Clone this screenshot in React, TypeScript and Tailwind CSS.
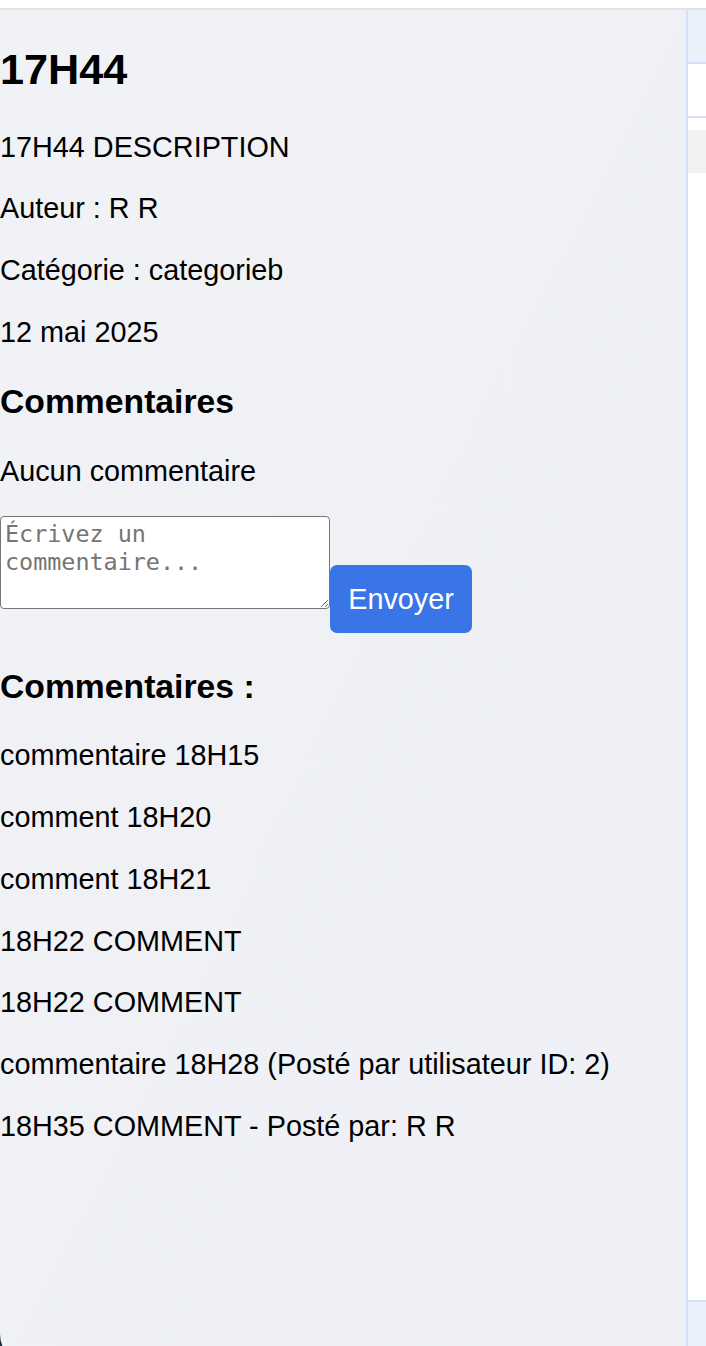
import React from "react";

const comments = [
  "commentaire 18H15",
  "comment 18H20",
  "comment 18H21",
  "18H22 COMMENT",
  "18H22 COMMENT",
  "commentaire 18H28 (Posté par utilisateur ID: 2)",
  "18H35 COMMENT - Posté par: R R",
];

function P({ children }: { children: React.ReactNode }) {
  return <p className="text-[28.8px] leading-[32.9px] my-[28.8px]">{children}</p>;
}

function H3({ children }: { children: React.ReactNode }) {
  return <h3 className="text-[33.7px] leading-[38.7px] font-bold my-[33.7px]">{children}</h3>;
}

function SideStrip() {
  return (
    <div className="w-[18px] self-stretch flex flex-col">
      <div className="h-[54px] shrink-0 bg-[#ebf1fb] border-b-2 border-[#d3e0f7]" />
      <div className="h-[54px] shrink-0 bg-white border-b-2 border-[#d3e0f7]" />
      <div className="h-[12px] shrink-0 bg-white" />
      <div className="h-[43px] shrink-0 bg-[#f2f2f2]" />
      <div className="h-[1129px] shrink-0 bg-white border-b-2 border-[#d3e0f7]" />
      <div className="flex-1 bg-[#ebf1fb]" />
    </div>
  );
}

export default function App() {
  return (
    <div
      className="h-[1346px] overflow-hidden bg-white flex flex-col text-black"
      style={{ fontFamily: '"Liberation Sans", Arial, sans-serif' }}
    >
      <div className="h-[10px] shrink-0 border-b-2 border-[#e3e3e3] bg-white" />
      <div className="flex-1 min-h-0 flex items-start bg-[#102c44]">
        <div className="w-[688px] h-[1356px] shrink-0 bg-gradient-to-br from-[#f0f2f6] to-[#eef0f5] border-r-2 border-[#d3e0f7] rounded-bl-[32px]">
          <h2 className="text-[43.2px] leading-[49.6px] font-bold mt-[35px] mb-[36px]">17H44</h2>
          <P>17H44 DESCRIPTION</P>
          <P>Auteur : R R</P>
          <P>Catégorie : categorieb</P>
          <P>12 mai 2025</P>
          <H3>Commentaires</H3>
          <P>Aucun commentaire</P>
          <div className="flex items-start mb-[2px]">
            <textarea
              placeholder="Écrivez un commentaire..."
              className="w-[330px] h-[93px] bg-white border border-[#767676] rounded-[4px] px-[4px] py-[3px] text-[23.4px] leading-[28px] placeholder:text-[#757575]"
              style={{ fontFamily: '"DejaVu Sans Mono", monospace', resize: "both" }}
            />
            <button className="mt-[49px] w-[142px] h-[68px] bg-[#3a75e8] text-white rounded-[7px] text-[28.8px]">
              Envoyer
            </button>
          </div>
          <H3>Commentaires :</H3>
          {comments.map((c, i) => (
            <P key={i}>{c}</P>
          ))}
        </div>
        <SideStrip />
      </div>
    </div>
  );
}
